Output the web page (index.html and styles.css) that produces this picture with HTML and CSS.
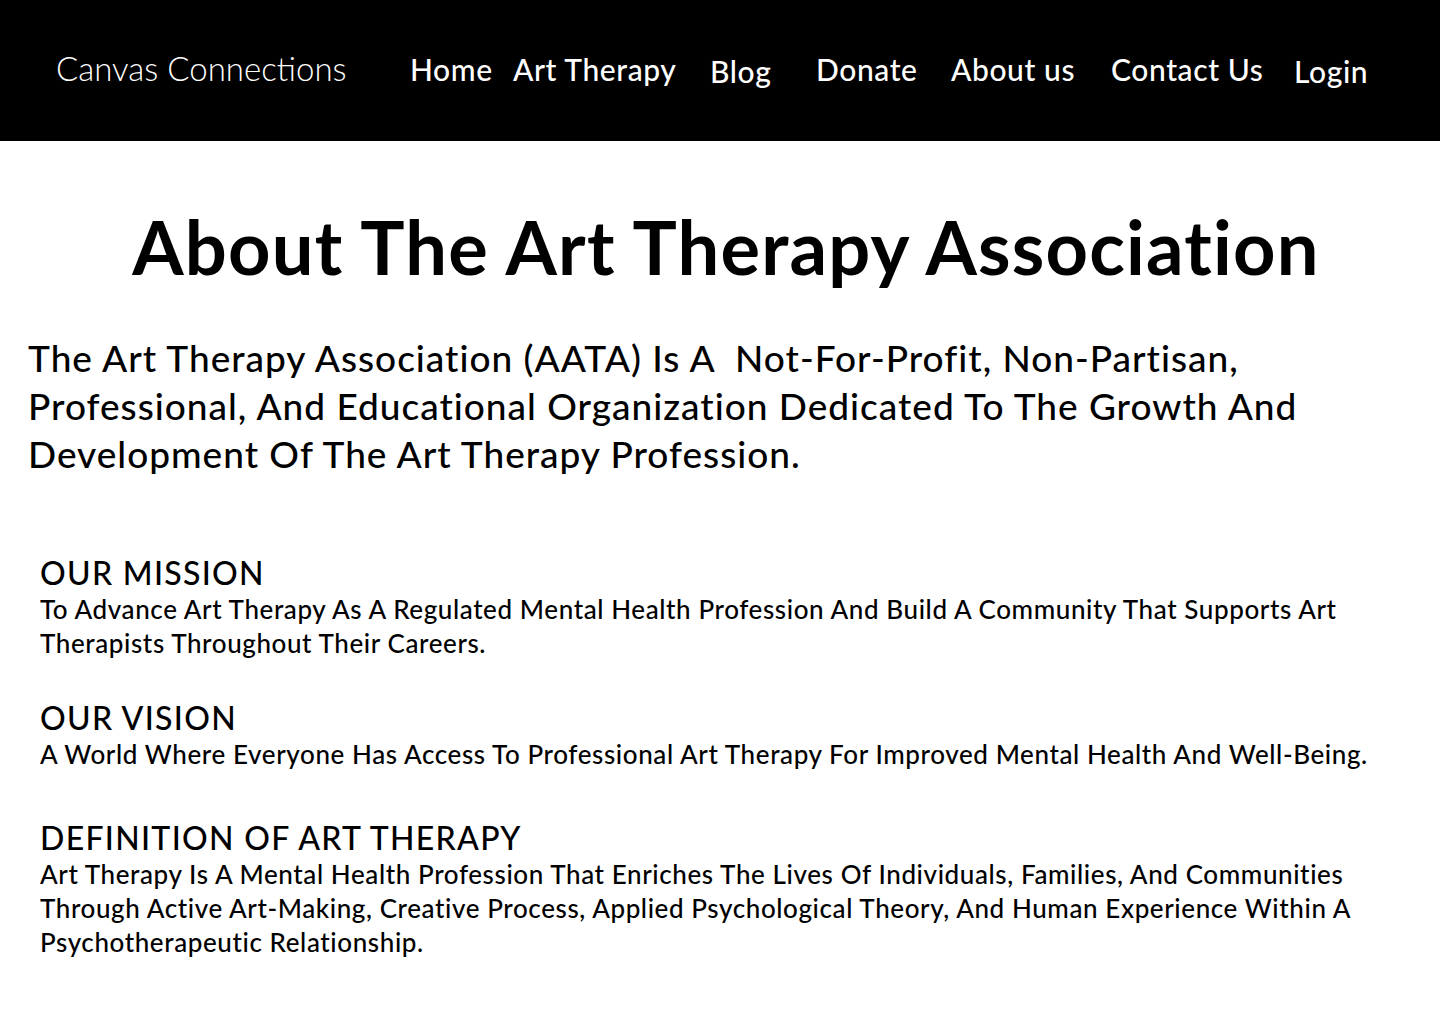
FILE: index.html
```html
<!DOCTYPE html>
<html lang="en">
<head>
<meta charset="utf-8">
<title>About - Canvas Connections</title>
<link rel="stylesheet" href="styles.css">
</head>
<body>
<header class="site-header">
  <div class="brand">Canvas Connections</div>
  <nav class="nav">
    <a class="nav-link" href="#">Home</a>
    <a class="nav-link" href="#">Art Therapy</a>
    <a class="nav-link nav-low" href="#">Blog</a>
    <a class="nav-link" href="#">Donate</a>
    <a class="nav-link" href="#">About us</a>
    <a class="nav-link" href="#">Contact Us</a>
    <a class="nav-link nav-low" href="#">Login</a>
  </nav>
</header>
<main class="content">
  <h1 class="title">About The Art Therapy Association</h1>
  <p class="intro">The Art Therapy Association (AATA) Is A&nbsp; Not-For-Profit, Non-Partisan,<br>Professional, And Educational Organization Dedicated To The Growth And<br>Development Of The Art Therapy Profession.</p>
  <section class="block block-first">
    <h2 class="block-title">OUR MISSION</h2>
    <p class="block-text">To Advance Art Therapy As A Regulated Mental Health Profession And Build A Community That Supports Art<br>Therapists Throughout Their Careers.</p>
  </section>
  <section class="block">
    <h2 class="block-title">OUR VISION</h2>
    <p class="block-text">A World Where Everyone Has Access To Professional Art Therapy For Improved Mental Health And Well-Being.</p>
  </section>
  <section class="block block-last">
    <h2 class="block-title">DEFINITION OF ART THERAPY</h2>
    <p class="block-text">Art Therapy Is A Mental Health Profession That Enriches The Lives Of Individuals, Families, And Communities<br>Through Active Art-Making, Creative Process, Applied Psychological Theory, And Human Experience Within A<br>Psychotherapeutic Relationship.</p>
  </section>
</main>
</body>
</html>
```

FILE: styles.css
```css
* { box-sizing: border-box; }
html, body { margin: 0; padding: 0; }
body {
  background: #ffffff;
  color: #000000;
  font-family: "Lato", "Open Sans", sans-serif;
}

.site-header {
  background: #000000;
  height: 141px;
  display: flex;
  align-items: center;
  padding-left: 56px;
}
.brand {
  color: #ffffff;
  font-weight: 300;
  font-size: 33px;
  width: 354px;
  margin-top: -6px;
  white-space: nowrap;
}
.nav {
  display: grid;
  grid-template-columns: 103px 197px 106px 135px 160px 183px auto;
  align-items: center;
  margin-top: -3px;
}
.nav-link {
  color: #ffffff;
  text-decoration: none;
  font-size: 30px;
  letter-spacing: 0.6px;
  font-weight: 500;
  white-space: nowrap;
}
.nav-low { margin-top: 4px; }

.content { padding: 0; }
.title {
  margin: 61px 0 0;
  padding-left: 12px;
  text-align: center;
  font-size: 74px;
  line-height: 89px;
  letter-spacing: 1.2px;
  font-weight: 700;
}
.intro {
  margin: 43px 0 0;
  padding-left: 28px;
  font-size: 37px;
  line-height: 48px;
  letter-spacing: 1px;
  font-weight: 500;
}
.block {
  padding-left: 40px;
  margin-top: 39px;
}
.block-first { margin-top: 76px; }
.block-last { margin-top: 48px; }
.block-title {
  margin: 0;
  font-size: 32px;
  line-height: 38px;
  letter-spacing: 1.3px;
  font-weight: 500;
}
.block-text {
  margin: 0;
  font-size: 26px;
  line-height: 34px;
  letter-spacing: 0.6px;
  font-weight: 500;
}
```
